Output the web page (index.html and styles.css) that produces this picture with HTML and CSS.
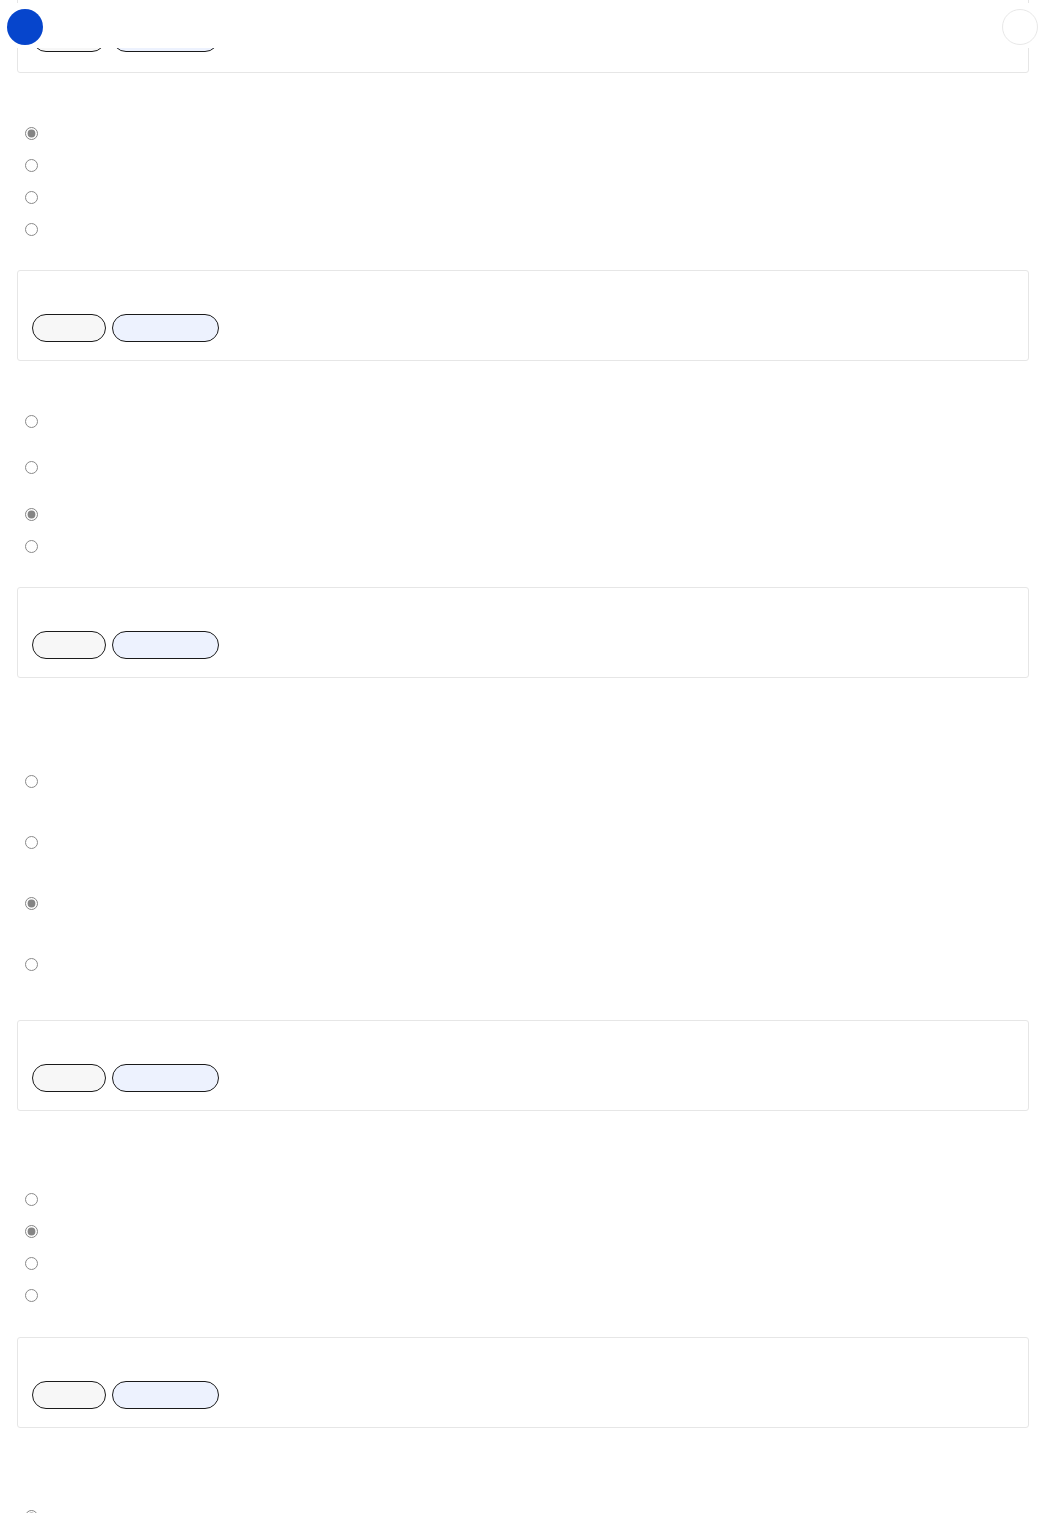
FILE: index.html
```html
<!DOCTYPE html>
<html lang="en">
<head>
    <meta charset="UTF-8">
    <title>Practice quiz</title>
    <link rel="stylesheet" href="styles.css">
</head>
<body>
    <div class="topbar">
        <button class="fab fab-left" aria-label="Menu"></button>
        <button class="fab fab-right" aria-label="Settings"></button>
    </div>

    <div class="quiz">
        <!-- question 1 (feedback only, scrolled) -->
        <div class="card first">
            <p class="card-text">Correct. The answer has been saved.</p>
            <div class="actions">
                <button class="pill">Retry</button>
                <button class="pill pill-blue">Next question</button>
            </div>
        </div>

        <!-- question 2 -->
        <p class="question">2. Which planet is closest to the sun?</p>
        <label class="option"><input type="radio" name="q2" checked><span>Mercury</span></label>
        <label class="option"><input type="radio" name="q2"><span>Venus</span></label>
        <label class="option"><input type="radio" name="q2"><span>Earth</span></label>
        <label class="option"><input type="radio" name="q2"><span>Mars</span></label>
        <div class="card">
            <p class="card-text">Correct. Mercury orbits nearest to the sun.</p>
            <div class="actions">
                <button class="pill">Retry</button>
                <button class="pill pill-blue">Next question</button>
            </div>
        </div>

        <!-- question 3 -->
        <p class="question">3. What does a plant mainly use sunlight for?</p>
        <label class="option"><input type="radio" name="q3"><span>To warm its roots so that water<br>can move up the stem</span></label>
        <label class="option"><input type="radio" name="q3"><span>To break down soil minerals<br>into smaller pieces</span></label>
        <label class="option"><input type="radio" name="q3" checked><span>To make food by photosynthesis</span></label>
        <label class="option"><input type="radio" name="q3"><span>To release seeds</span></label>
        <div class="card">
            <p class="card-text">Correct. Light energy is turned into sugar.</p>
            <div class="actions">
                <button class="pill">Retry</button>
                <button class="pill pill-blue">Next question</button>
            </div>
        </div>

        <!-- question 4 -->
        <p class="question">4. Read the passage below.<br>The river rose quickly after three days of rain,<br>and the town closed the old bridge.<br>Why was the bridge closed?</p>
        <label class="option"><input type="radio" name="q4"><span>Because the town was building<br>a new road next to the river<br>during the summer</span></label>
        <label class="option"><input type="radio" name="q4"><span>Because the bridge was painted<br>and the paint had not<br>dried yet</span></label>
        <label class="option"><input type="radio" name="q4" checked><span>Because the high water<br>made crossing the old bridge<br>unsafe</span></label>
        <label class="option"><input type="radio" name="q4"><span>Because nobody used<br>the bridge anymore</span></label>
        <div class="card">
            <p class="card-text">Correct. The flood made the bridge unsafe.</p>
            <div class="actions">
                <button class="pill">Retry</button>
                <button class="pill pill-blue">Next question</button>
            </div>
        </div>

        <!-- question 5 -->
        <p class="question">5. A shop sells pencils in packs of 12.<br>Sara buys 4 packs.<br>How many pencils does she have?</p>
        <label class="option"><input type="radio" name="q5"><span>16</span></label>
        <label class="option"><input type="radio" name="q5" checked><span>48</span></label>
        <label class="option"><input type="radio" name="q5"><span>36</span></label>
        <label class="option"><input type="radio" name="q5"><span>52</span></label>
        <div class="card">
            <p class="card-text">Correct. 4 × 12 = 48.</p>
            <div class="actions">
                <button class="pill">Retry</button>
                <button class="pill pill-blue">Next question</button>
            </div>
        </div>

        <!-- question 6 -->
        <p class="question">6. Choose the word that best completes<br>the sentence: The cat slept ___ the warm<br>blanket all afternoon.</p>
        <label class="option"><input type="radio" name="q6" checked><span>on</span></label>
        <label class="option"><input type="radio" name="q6"><span>at</span></label>
    </div>
</body>
</html>
```

FILE: styles.css
```css
body {
    margin: 0;
    background: #fff;
    color: #fff;
    font-family: "Liberation Sans", Arial, sans-serif;
    font-size: 12px;
}

/* header stays on top while the quiz scrolls under it */
.topbar {
    position: fixed;
    top: 3px;
    left: 0;
    right: 0;
    height: 45px;
    display: flex;
    justify-content: space-between;
    align-items: flex-start;
    padding: 6px 7px 0;
    box-sizing: border-box;
    background: #fff;
    z-index: 10;
}

.fab {
    width: 36px;
    height: 36px;
    border-radius: 50%;
    padding: 0;
    cursor: pointer;
}

.fab-left {
    background: #0645cc;
    border: none;
}

.fab-right {
    background: #fff;
    border: 1px solid #e8e8e8;
}

.quiz {
    margin: -18px 16px 0 17px;
}

.question {
    margin: 16px 0 13.6px 8px;
    line-height: 14.4px;
}

.option {
    display: flex;
    align-items: flex-start;
    gap: 8px;
    padding: 8.75px 0 8.75px 8px;
    line-height: 14.5px;
}

.option input {
    margin: 0.75px 0 0 0;
    width: 13px;
    height: 13px;
    flex-shrink: 0;
    accent-color: #707070;
    opacity: 0.85;
}

.card {
    margin-top: 25px;
    padding: 14px 14px 18px;
    border: 1px solid #e6e6e6;
    border-radius: 3px;
    background: #fff;
}

.card.first {
    margin-top: 0;
    padding-bottom: 20px;
}

.card-text {
    margin: 0 0 11px;
    line-height: 18px;
}

.card.first .card-text {
    margin-bottom: 9px;
}

.actions {
    display: flex;
    gap: 6px;
}

.pill {
    height: 28px;
    width: 74px;
    padding: 0 14px;
    border: 1px solid #1a1a1a;
    border-radius: 14px;
    background: #f7f7f7;
    color: #f7f7f7;
    font-family: inherit;
    font-size: 12px;
}

.pill-blue {
    width: 107px;
    background: #edf2fe;
    color: #edf2fe;
}
```
